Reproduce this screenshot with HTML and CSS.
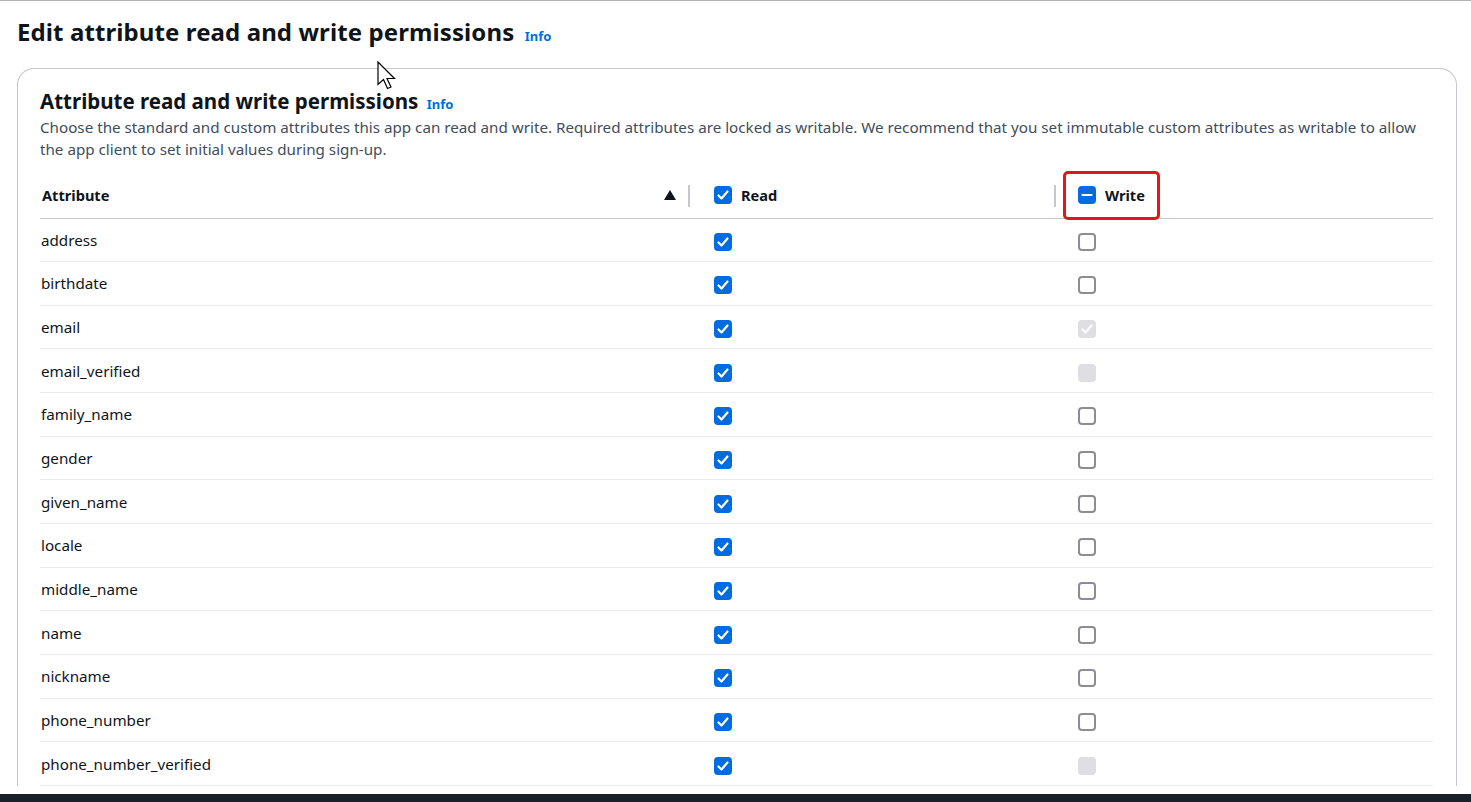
FILE: index.html
```html
<!DOCTYPE html>
<html lang="en">
<head>
<meta charset="utf-8">
<title>Edit attribute read and write permissions</title>
<link rel="stylesheet" href="styles.css">
</head>
<body>
<div class="topline"></div>
<main class="page">
  <h1 class="page-title">Edit attribute read and write permissions <a class="info" href="#">Info</a></h1>

  <section class="card">
    <h2 class="card-title">Attribute read and write permissions <a class="info" href="#">Info</a></h2>
    <p class="desc">Choose the standard and custom attributes this app can read and write. Required attributes are locked as writable. We recommend that you set immutable custom attributes as writable to allow the app client to set initial values during sign-up.</p>

    <div class="table">
      <div class="row head">
        <div class="cell c1">
          <span class="th">Attribute</span>
          <span class="sort"></span>
          <span class="divider"></span>
        </div>
        <div class="cell c2">
          <span class="cb checked"><svg viewBox="0 0 18 18"><polyline points="4.5,9.5 7.5,12.5 13.5,5.5"/></svg></span>
          <span class="th">Read</span>
          <span class="divider"></span>
        </div>
        <div class="cell c3">
          <span class="cb checked"><svg viewBox="0 0 18 18"><line x1="4.5" y1="9" x2="13.5" y2="9"/></svg></span>
          <span class="th">Write</span>
          <span class="highlight"></span>
        </div>
      </div>

      <div class="row"><div class="cell c1">address</div><div class="cell c2"><span class="cb checked"><svg viewBox="0 0 18 18"><polyline points="4.5,9.5 7.5,12.5 13.5,5.5"/></svg></span></div><div class="cell c3"><span class="cb"></span></div></div>
      <div class="row"><div class="cell c1">birthdate</div><div class="cell c2"><span class="cb checked"><svg viewBox="0 0 18 18"><polyline points="4.5,9.5 7.5,12.5 13.5,5.5"/></svg></span></div><div class="cell c3"><span class="cb"></span></div></div>
      <div class="row"><div class="cell c1">email</div><div class="cell c2"><span class="cb checked"><svg viewBox="0 0 18 18"><polyline points="4.5,9.5 7.5,12.5 13.5,5.5"/></svg></span></div><div class="cell c3"><span class="cb disabled"><svg viewBox="0 0 18 18"><polyline points="4.5,9.5 7.5,12.5 13.5,5.5"/></svg></span></div></div>
      <div class="row"><div class="cell c1">email_verified</div><div class="cell c2"><span class="cb checked"><svg viewBox="0 0 18 18"><polyline points="4.5,9.5 7.5,12.5 13.5,5.5"/></svg></span></div><div class="cell c3"><span class="cb disabled"></span></div></div>
      <div class="row"><div class="cell c1">family_name</div><div class="cell c2"><span class="cb checked"><svg viewBox="0 0 18 18"><polyline points="4.5,9.5 7.5,12.5 13.5,5.5"/></svg></span></div><div class="cell c3"><span class="cb"></span></div></div>
      <div class="row"><div class="cell c1">gender</div><div class="cell c2"><span class="cb checked"><svg viewBox="0 0 18 18"><polyline points="4.5,9.5 7.5,12.5 13.5,5.5"/></svg></span></div><div class="cell c3"><span class="cb"></span></div></div>
      <div class="row"><div class="cell c1">given_name</div><div class="cell c2"><span class="cb checked"><svg viewBox="0 0 18 18"><polyline points="4.5,9.5 7.5,12.5 13.5,5.5"/></svg></span></div><div class="cell c3"><span class="cb"></span></div></div>
      <div class="row"><div class="cell c1">locale</div><div class="cell c2"><span class="cb checked"><svg viewBox="0 0 18 18"><polyline points="4.5,9.5 7.5,12.5 13.5,5.5"/></svg></span></div><div class="cell c3"><span class="cb"></span></div></div>
      <div class="row"><div class="cell c1">middle_name</div><div class="cell c2"><span class="cb checked"><svg viewBox="0 0 18 18"><polyline points="4.5,9.5 7.5,12.5 13.5,5.5"/></svg></span></div><div class="cell c3"><span class="cb"></span></div></div>
      <div class="row"><div class="cell c1">name</div><div class="cell c2"><span class="cb checked"><svg viewBox="0 0 18 18"><polyline points="4.5,9.5 7.5,12.5 13.5,5.5"/></svg></span></div><div class="cell c3"><span class="cb"></span></div></div>
      <div class="row"><div class="cell c1">nickname</div><div class="cell c2"><span class="cb checked"><svg viewBox="0 0 18 18"><polyline points="4.5,9.5 7.5,12.5 13.5,5.5"/></svg></span></div><div class="cell c3"><span class="cb"></span></div></div>
      <div class="row"><div class="cell c1">phone_number</div><div class="cell c2"><span class="cb checked"><svg viewBox="0 0 18 18"><polyline points="4.5,9.5 7.5,12.5 13.5,5.5"/></svg></span></div><div class="cell c3"><span class="cb"></span></div></div>
      <div class="row"><div class="cell c1">phone_number_verified</div><div class="cell c2"><span class="cb checked"><svg viewBox="0 0 18 18"><polyline points="4.5,9.5 7.5,12.5 13.5,5.5"/></svg></span></div><div class="cell c3"><span class="cb disabled"></span></div></div>
    </div>
  </section>
</main>

<svg class="cursor" width="21" height="29" viewBox="0 0 21 29"><path d="M1 1 V23.5 L6.5 18.5 L10.5 27.5 L14 26 L10 17.5 H17.5 Z" fill="#fff" stroke="#000" stroke-width="1.2" stroke-linejoin="miter"/></svg>
<div class="bottombar"></div>
</body>
</html>
```

FILE: styles.css
```css
* { box-sizing: border-box; }

html, body {
  margin: 0;
  padding: 0;
  background: #fff;
}

body {
  font-family: "Noto Sans", "Open Sans", Arial, sans-serif;
  color: #0f141a;
  font-size: 15.2px;
}

.topline {
  height: 1px;
  background: #b4b4bb;
}

.page {
  padding: 16px 14px 0 17px;
}

.page-title {
  margin: 0;
  font-size: 24px;
  line-height: 30px;
  font-weight: 700;
  letter-spacing: 0.1px;
  color: #0f141a;
}

.info {
  font-size: 13px;
  font-weight: 700;
  color: #006ce0;
  text-decoration: none;
  letter-spacing: 0;
  margin-left: 4px;
}

.card {
  margin-top: 17px;
  width: 1440px;
  border: 1px solid #c6c6cd;
  border-radius: 17px;
  border-bottom: none;
  border-bottom-left-radius: 0;
  border-bottom-right-radius: 0;
  padding: 20px 23px 0 22px;
}

.card-title {
  margin: 0;
  font-size: 20.5px;
  line-height: 24px;
  font-weight: 700;
  letter-spacing: 0;
  color: #0f141a;
}

.card-title .info {
  margin-left: 3px;
}

.desc {
  margin: 0;
  font-size: 15.2px;
  line-height: 22px;
  color: #414d5c;
}

.table {
  margin-top: 13px;
  width: 1393px;
}

.row {
  display: grid;
  grid-template-columns: 650px 366px 377px;
  height: 43.667px;
  border-bottom: 1px solid #ebebf0;
}

.row.head {
  height: 45.5px;
  border-bottom: 1px solid #c6c6cd;
}

.cell {
  display: flex;
  align-items: center;
  position: relative;
}

.c1 {
  padding-left: 1px;
  color: #0f141a;
}

.head .c1 {
  padding-left: 2px;
}

.c2 { padding-left: 24px; }
.c3 { padding-left: 22px; }

.th {
  font-weight: 700;
  font-size: 14.6px;
  color: #0f141a;
}

.c2 .th, .c3 .th {
  margin-left: 9px;
}

.sort {
  margin-left: auto;
  margin-right: 14px;
  width: 0;
  height: 0;
  border-left: 6px solid transparent;
  border-right: 6px solid transparent;
  border-bottom: 10px solid #0f141a;
}

.divider {
  position: absolute;
  right: 0;
  top: 12px;
  width: 2px;
  height: 22px;
  background: #c6c6cd;
}

.cb {
  width: 18px;
  height: 18px;
  border-radius: 4px;
  border: 2px solid #8c8c94;
  background: #fff;
  display: inline-flex;
  flex: none;
}

.row:not(.head) .cb {
  margin-top: 4px;
}

.cb svg {
  width: 18px;
  height: 18px;
  margin: -2px;
}

.cb svg polyline, .cb svg line {
  fill: none;
  stroke: #fff;
  stroke-width: 2.2;
  stroke-linecap: round;
  stroke-linejoin: round;
}

.cb.checked {
  background: #006ce0;
  border-color: #006ce0;
}

.cb.disabled {
  background: #dedee3;
  border-color: #dedee3;
}

.highlight {
  position: absolute;
  left: 7px;
  top: -2px;
  width: 97px;
  height: 49px;
  border: 3px solid #e8141c;
  border-radius: 5px;
}

.cursor {
  position: absolute;
  left: 377px;
  top: 61px;
}

.bottombar {
  position: fixed;
  left: 0;
  right: 0;
  bottom: 0;
  height: 8px;
  background: #1b1f29;
}
```
